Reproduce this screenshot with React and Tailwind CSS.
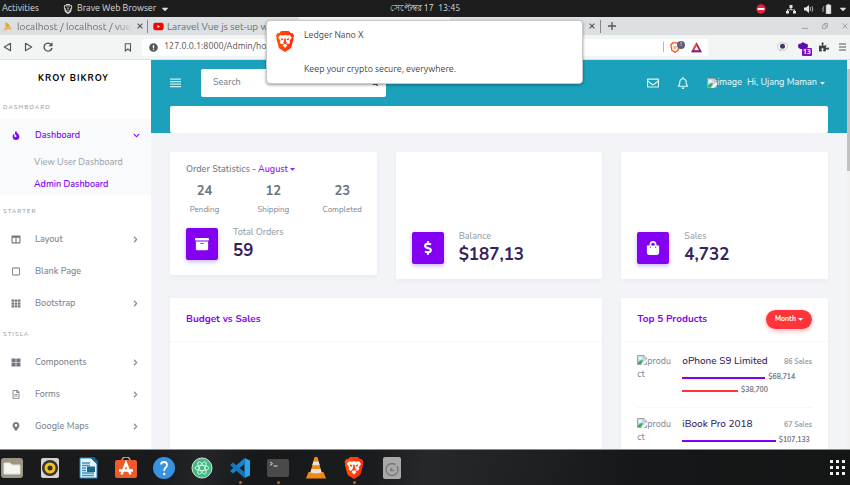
import React from "react";
import {
  FaFire, FaColumns, FaTh, FaThLarge, FaMapMarkerAlt, FaRegFileAlt, FaRegSquare,
  FaChevronRight, FaChevronDown, FaArchive, FaDollarSign, FaShoppingBag, FaRegEnvelope,
  FaRegBell, FaSearch, FaCaretDown, FaYoutube, FaPuzzlePiece, FaExclamationCircle,
} from "react-icons/fa";
import { SiBrave, SiPhpmyadmin } from "react-icons/si";

const system = "font-['Ubuntu','Open_Sans','Noto_Sans',sans-serif]";
const nunito = "font-['Nunito','Open_Sans','Noto_Sans',sans-serif]";

function Brave({ className }) {
  return (
    <span className={`relative inline-block ${className}`}>
      <svg viewBox="0 0 24 28" className="block h-full w-full">
        <defs>
          <linearGradient id="brave" x1="0" x2="1">
            <stop offset="0" stopColor="#ff5601" />
            <stop offset="1" stopColor="#ff2a12" />
          </linearGradient>
        </defs>
        <path fill="url(#brave)" d="M7 0h10l3 3 2-.4L24 6l-.8 3 .3 1.2-3 11.2c-.4 1.4-1.200 2-2.500 2.900L12 28l-6-3.700C4.700 23.400 3.900 22.800 3.500 21.400L.5 10.200.8 9 0 6l2-3.400L4 3z" />
        <path fill="#fff" d="M12 5.200 15 6l3.500-.6L21 9l-3 4 .8 2.600-2.500 2.200-1.900-1.100-.9.800 1.700 1.700L12 22.400l-3.200-3.200 1.700-1.700-.9-.8-1.900 1.100-2.500-2.200L6 13 3 9l2.500-3.600L9 6z" />
        <path fill="#ff4310" d="M6.500 9.200 10 10.500l-.8 1.800-2-.4zM17.500 9.200 14 10.500l.8 1.800 2-.4zM11 10h2l.5 4.500L15 16l-3 1.500L9 16l1.500-1.500z" />
      </svg>
    </span>
  );
}

function BrokenImage({ className = "" }) {
  return (
    <svg viewBox="0 0 10 10" className={`inline-block h-[10px] w-[10px] ${className}`}>
      <path d="M.5.500h6.500l2.500 2.500v6.500h-9z" fill="#c9d7f2" stroke="#a3a3a3" />
      <path d="M7 .5v2.500h2.500" fill="#fff" stroke="#a3a3a3" strokeWidth=".7" />
      <circle cx="3.300" cy="3.200" r="1.300" fill="#fff" />
      <path d="M1 9V7.500C3 5 5 5 6 5.500L4 9z" fill="#35b34a" />
      <path d="M4 10 10 4v2.500L6.500 10z" fill="#fff" />
    </svg>
  );
}

function Caret() {
  return (
    <svg viewBox="0 0 5 3" className="h-[3px] w-[5px]">
      <path d="M0 0h5L2.500 2.800z" fill="currentColor" />
    </svg>
  );
}

function TopBar() {
  return (
    <div className={`grid h-[17px] shrink-0 grid-cols-3 items-center bg-[#1d1d1d] text-[9px] text-[#dedede] ${system}`}>
      <div className="flex items-center">
        <button className="pl-[2px]">Activities</button>
        <button className="ml-[24px] flex items-center gap-1 whitespace-nowrap">
          <SiBrave className="text-[10px] text-[#cfcfcf]" />
          Brave Web Browser
          <FaCaretDown className="text-[10px]" />
        </button>
      </div>
      <div className="text-center">সেপ্টেম্বর 17&nbsp; 13:45</div>
      <div className="flex items-center justify-end pr-[2px]">
        <svg viewBox="0 0 10 10" className="mr-[20px] h-[10px] w-[10px]">
          <circle cx="5" cy="5" r="4.700" fill="#ee2040" />
          <rect x="1.700" y="4" width="6.600" height="2" fill="#fff" />
        </svg>
        <svg viewBox="0 0 10 10" className="mr-[8px] h-[10px] w-[10px]" fill="#e6e6e6">
          <path d="M3.500 1h3v3h-1v1.500h3.500V7h1v2.500H7V7h1v-.7H2V7h1v2.500H0V7h1V5.500h3.500V4h-1z" />
        </svg>
        <svg viewBox="0 0 10 10" className="mr-[8px] h-[10px] w-[10px]">
          <path d="M0 3.500h2L5 1v8L2 6.500H0z" fill="#e6e6e6" />
          <path d="M6.300 3v4M8 2.300Q9.500 5 8 7.700" fill="none" stroke="#c4c4c4" strokeWidth=".9" />
        </svg>
        <svg viewBox="0 0 10 10" className="mr-[6px] h-[10px] w-[10px]">
          <path d="M2 2 .5 5h1L.7 8" fill="none" stroke="#bbb" strokeWidth=".8" />
          <path d="M4 1h1.500V0h2v1H9v9H4z" fill="#e6e6e6" stroke="#999" strokeWidth=".5" />
        </svg>
        <FaCaretDown className="text-[10px]" />
      </div>
    </div>
  );
}

function Close() {
  return (
    <svg viewBox="0 0 6 6" className="h-[6px] w-[6px]">
      <path d="M.6.6l4.800 4.800M5.400.6.6 5.400" stroke="#55595c" strokeWidth="1.200" />
    </svg>
  );
}

function TabStrip() {
  return (
    <div className={`flex h-[18px] shrink-0 items-center bg-[#dce0e3] text-[10px] text-[#6b6e71] ${system}`}>
      <div className="flex h-full w-[147px] shrink-0 items-center pl-[2px]">
        <SiPhpmyadmin className="text-[11px] text-[#e99a26]" />
        <span className="ml-1 w-[116px] whitespace-nowrap [mask-image:linear-gradient(to_right,black_85%,transparent)]">localhost / localhost / vuej</span>
        <button aria-label="Close tab" className="ml-[4px]"><Close /></button>
      </div>
      <div className="flex h-[13px] w-[152px] shrink-0 items-center border-l border-[#85888b] pl-[5px]">
        <FaYoutube className="text-[11px] text-[#f00]" />
        <span className="ml-[3px] whitespace-nowrap">Laravel Vue js set-up with</span>
      </div>
      <div className="h-full w-[151px] shrink-0 bg-[#f2f3f4]" />
      <div className="flex h-[13px] w-[151px] shrink-0 items-center justify-end border-r border-[#85888b] pr-[5px]">
        <button aria-label="Close tab"><Close /></button>
      </div>
      <button aria-label="New tab" className="ml-[7px]">
        <svg viewBox="0 0 8 8" className="h-2 w-2"><path d="M4 0v8M0 4h8" stroke="#53575a" strokeWidth="1.300" /></svg>
      </button>
      <div className="ml-auto flex items-center gap-[14px] pr-[2px]">
        <button aria-label="Minimize"><svg viewBox="0 0 6 6" className="h-[6px] w-[6px]"><path d="M0 5.500h6" stroke="#a5a8ab" strokeWidth="1.200" /></svg></button>
        <button aria-label="Restore"><svg viewBox="0 0 6 6" className="h-[6px] w-[6px]"><path d="M.5 2h3.500v3.500H.5zM2 2V.5h3.500V4H4" fill="none" stroke="#9b9ea1" strokeWidth=".9" /></svg></button>
        <button aria-label="Close window"><svg viewBox="0 0 6 6" className="h-[6px] w-[6px]"><path d="M.5.5l5 5M5.500.5l-5 5" stroke="#a0a3a6" strokeWidth="1" /></svg></button>
      </div>
    </div>
  );
}

function Toolbar() {
  return (
    <div className={`flex h-[25px] shrink-0 items-center border-b border-[#dcdedf] bg-[#f3f4f4] text-[9px] text-[#4f5254] ${system}`}>
      <button aria-label="Back" className="ml-[3px]"><svg viewBox="0 0 9 10" className="h-[10px] w-[9px]"><path d="M7.500 1.300v7.400L1.300 5z" fill="none" stroke="#55585b" strokeWidth="1.200" strokeLinejoin="round" /></svg></button>
      <button aria-label="Forward" className="ml-[12px]"><svg viewBox="0 0 9 10" className="h-[10px] w-[9px]"><path d="M1.500 1.300v7.400L7.700 5z" fill="none" stroke="#55585b" strokeWidth="1.200" strokeLinejoin="round" /></svg></button>
      <button aria-label="Reload" className="ml-[10px]"><svg viewBox="0 0 10 10" className="h-[10px] w-[10px]"><path d="M8.200 2.600A4 4 0 1 0 9 6" fill="none" stroke="#4a4d50" strokeWidth="1.300" /><path d="M9.500.3v4H5.500z" fill="#4a4d50" /></svg></button>
      <button aria-label="Bookmark" className="ml-[71px]"><svg viewBox="0 0 8 9" className="h-[9px] w-[8px]"><path d="M1.300.7h5.200v7.300L3.900 6 1.300 8z" fill="none" stroke="#55585b" strokeWidth="1.100" /></svg></button>
      <div className="ml-[10px] flex h-[17px] w-[566px] items-center rounded-[2px] bg-white pl-[7px] pr-[6px]">
        <FaExclamationCircle className="shrink-0 text-[9px] text-[#55585b]" />
        <input aria-label="Address" readOnly defaultValue="127.0.0.1:8000/Admin/home" className="ml-[6px] min-w-0 flex-1 bg-transparent outline-none" />
        <div className="mr-[6px] h-[10px] w-px bg-[#b5b7b9]" />
        <span className="relative mr-[10px] h-[11px] w-[11px]">
          <svg viewBox="0 0 11 12" className="h-[11px] w-[10px]"><path d="M3 1h5l2 2-1 6-3.500 2.300L2 9 1 3z" fill="#fff5ef" stroke="#f4511e" strokeWidth="1.400" /><path d="M3.500 4 5.500 5l2-1-.8 3-1.200 1-1.200-1z" fill="#f4511e" opacity=".5" /></svg>
          <span className="absolute -top-px left-[7px] flex h-[8px] w-[8px] items-center justify-center rounded-full bg-[#5e6175] text-[5px] text-white">1</span>
        </span>
        <svg viewBox="0 0 11 11" className="h-[11px] w-[11px]"><path d="M5.500 2 9.500 9.300h-8z" fill="#fff" stroke="#9e1f63" strokeWidth="1.800" /><path d="M5.500 2 1.500 9.300" stroke="#ff4724" strokeWidth="1.800" /><path d="M1 9.300h9" stroke="#662d91" strokeWidth="1.800" /></svg>
      </div>
      <div className="ml-auto flex items-center gap-[10px] pr-[4px]">
        <svg viewBox="0 0 11 10" className="h-[10px] w-[11px]"><ellipse cx="5.500" cy="4.500" rx="5" ry="3.800" fill="#fff" stroke="#b9bbbd" strokeWidth=".8" /><circle cx="5.500" cy="4.300" r="2.500" fill="#443466" /><path d="M3 7 2 9.500 5.500 8" fill="#c5c7c9" /></svg>
        <span className="relative mr-px h-[11px] w-[10px]">
          <svg viewBox="0 0 10 10" className="h-[10px] w-[10px]"><path d="M5 0 7 1.500 9.500 2 10 5 8 7H2L0 5 .5 2 3 1.500z" fill="#5a0cad" /></svg>
          <span className="absolute left-[4px] top-[6px] flex h-[8px] items-center rounded-[1px] bg-[#7c12c4] px-px text-[7px] font-bold text-white">13</span>
        </span>
        <FaPuzzlePiece className="text-[10px] text-[#3f4245]" />
        <svg viewBox="0 0 7 8" className="h-2 w-[7px]"><path d="M0 1h7M0 4h7M0 7h7" stroke="#55585b" strokeWidth="1.100" /></svg>
      </div>
    </div>
  );
}

function Notification() {
  return (
    <div role="alert" className={`absolute left-[266px] top-[20px] flex h-[64px] w-[317px] rounded-[4px] border border-[#c9c9c9] bg-white pl-[9px] text-[9px] text-[#3f3f3f] shadow-[0_1px_3px_rgba(0,0,0,0.4)] ${system}`}>
      <Brave className="mt-[10px] h-[21px] w-[18px]" />
      <div className="ml-[10px] flex flex-col justify-between pb-[7px] pt-[7px] leading-[14px]">
        <p>Ledger Nano X</p>
        <p>Keep your crypto secure, everywhere.</p>
      </div>
    </div>
  );
}

function Heading({ children }) {
  return <h2 className="flex h-6 items-center pl-[3px] pt-px text-[6px] font-semibold uppercase tracking-[1px] text-[#9ba2ab]">{children}</h2>;
}

function MenuItem({ icon: Icon, label, arrow = true }) {
  return (
    <a href="#" className="flex h-8 items-center pl-[11px] pr-[12px] text-[9px] font-medium text-[#7d858f]">
      <Icon className="w-[10px] text-[9px] text-[#717983]" />
      <span className="ml-[14px] flex-1 pt-[2px]">{label}</span>
      {arrow && <FaChevronRight className="text-[7px]" />}
    </a>
  );
}

function Sidebar() {
  return (
    <aside className="w-[151px] shrink-0 bg-white">
      <a href="#" className="flex h-[35px] items-center justify-center pr-1 pt-[2px] text-[9px] font-bold tracking-[1px] text-black">KROY BIKROY</a>
      <Heading>Dashboard</Heading>
      <div className="mb-1 h-[76px] bg-[#f8fafb]">
        <a href="#" className="flex h-8 items-center pl-[11px] pr-[11px] text-[9px] font-semibold text-[#8405ee]">
          <FaFire className="w-[10px] text-[9px]" />
          <span className="ml-[14px] flex-1 pt-[2px]">Dashboard</span>
          <FaChevronDown className="text-[7px]" />
        </a>
        <a href="#" className="flex h-[22px] items-center pl-[34px] pt-[2px] text-[9px] text-[#979ea8]">View User Dashboard</a>
        <a href="#" className="flex h-[22px] items-center pl-[34px] pt-[2px] text-[9px] font-semibold text-[#8405ee]">Admin Dashboard</a>
      </div>
      <Heading>Starter</Heading>
      <MenuItem icon={FaColumns} label="Layout" />
      <MenuItem icon={FaRegSquare} label="Blank Page" arrow={false} />
      <MenuItem icon={FaTh} label="Bootstrap" />
      <div className="h-[3px]" />
      <Heading>Stisla</Heading>
      <MenuItem icon={FaThLarge} label="Components" />
      <MenuItem icon={FaRegFileAlt} label="Forms" />
      <MenuItem icon={FaMapMarkerAlt} label="Google Maps" />
    </aside>
  );
}

function Card({ className = "", children }) {
  return <section className={`rounded-[2px] bg-white shadow-[0_2px_5px_rgba(0,0,0,0.04)] ${className}`}>{children}</section>;
}

function Stat({ icon: Icon, label, value }) {
  return (
    <div className="flex gap-[15px] px-4 pb-[15px]">
      <div className="flex h-8 w-8 items-center justify-center rounded-[2px] bg-[#8300f0] text-white shadow-[0_2px_4px_#c9b8f5]">
        <Icon className="text-[14px]" />
      </div>
      <div>
        <h3 className="text-[9px] font-medium leading-[9px] text-[#98a1aa]">{label}</h3>
        <p className="mt-[5px] text-[17px] font-bold leading-[18px] text-[#36235c]">{value}</p>
      </div>
    </div>
  );
}

function Product({ name, sales, bars }) {
  return (
    <li className="flex h-[63px] border-b border-[#f7f7f8] pt-[10px]">
      <div className="w-[35px] text-[9px] leading-[13px] text-[#7d858f] break-all"><BrokenImage className="align-top" />product</div>
      <div className="ml-[10px] flex-1">
        <div className="flex items-center justify-between leading-[13px]">
          <h4 className="text-[10px] font-medium text-[#36235c]">{name}</h4>
          <span className="text-[7px] font-bold text-[#98a1aa]">{sales} Sales</span>
        </div>
        <div className="mt-[3px]">
          {bars.map(([amount, width, color]) => (
            <div key={amount} className="flex h-[13px] items-center gap-[3px] text-[7px] font-bold text-[#737b85]">
              <div className={`h-[2px] shrink-0 ${color}`} style={{ width: `${width}%` }} />
              {amount}
            </div>
          ))}
        </div>
      </div>
    </li>
  );
}

function Main() {
  return (
    <main className="min-w-0 flex-1 overflow-hidden bg-[#f3f4f8]">
      <div className="bg-[#1ba1bc] px-[19px]">
        <nav className="flex h-[46px] items-center text-white">
          <button aria-label="Toggle menu">
            <svg viewBox="0 0 11 10" className="h-[10px] w-[11px]"><path d="M0 1.200h11M0 3.700h11M0 6.200h11M0 8.700h11" stroke="#cdebf1" strokeWidth="1.200" /></svg>
          </button>
          <form className="ml-[20px] flex h-7 w-[185px] items-center rounded-[2px] bg-white pl-[12px] pr-[8px]">
            <input aria-label="Search" placeholder="Search" className="min-w-0 flex-1 bg-transparent text-[9px] font-medium text-gray-700 outline-none placeholder:text-[#7d858f]" />
            <button type="button" aria-label="Submit search"><FaSearch className="text-[6px] text-[#222]" /></button>
          </form>
          <div className="ml-auto flex items-center pr-[3px] text-[9px] text-[#e3f4f7]">
            <button aria-label="Messages"><FaRegEnvelope className="text-[12px]" /></button>
            <button aria-label="Alerts" className="ml-[18px]"><FaRegBell className="text-[12px]" /></button>
            <button className="ml-[18px] flex items-center font-medium">
              <BrokenImage />image
              <span className="ml-[5px]">Hi, Ujang Maman</span>
              <span className="ml-[3px]"><Caret /></span>
            </button>
          </div>
        </nav>
        <div className="h-[27px] rounded-[2px] bg-white" />
      </div>
      <div className="grid grid-cols-3 items-start gap-[19px] px-[19px] pt-[19px]">
        <Card>
          <h3 className="flex items-center px-4 pt-[11px] text-[9px] font-semibold leading-[12px] text-[#7d858f]">
            Order Statistics -
            <button className="ml-[2px] flex items-center gap-[2px] text-[#8f1cf0]">August <Caret /></button>
          </h3>
          <div className="grid grid-cols-3 pb-[12px] pt-[8px] text-center">
            {[["24", "Pending"], ["12", "Shipping"], ["23", "Completed"]].map(([n, l]) => (
              <div key={l}>
                <p className="text-[13px] font-bold leading-[16px] text-[#6b7480]">{n}</p>
                <p className="mt-[5px] text-[8px] leading-[12px] text-[#7d858f]">{l}</p>
              </div>
            ))}
          </div>
          <Stat icon={FaArchive} label="Total Orders" value="59" />
        </Card>
        <Card className="pt-20"><Stat icon={FaDollarSign} label="Balance" value="$187,13" /></Card>
        <Card className="pt-20"><Stat icon={FaShoppingBag} label="Sales" value="4,732" /></Card>
        <Card className="col-span-2 h-[300px]">
          <h3 className="flex h-[44px] items-center border-b border-[#f7f7f8] px-4 text-[10px] font-bold text-[#8405ee]">Budget vs Sales</h3>
        </Card>
        <Card className="h-[300px]">
          <div className="flex h-[44px] items-center justify-between border-b border-[#f7f7f8] px-4">
            <h3 className="text-[10px] font-bold text-[#8405ee]">Top 5 Products</h3>
            <button className="flex h-[19px] items-center gap-[2px] rounded-full bg-[#ff353b] px-[9px] text-[7px] font-bold text-white shadow-[0_2px_4px_#fdb5b8]">
              Month <Caret />
            </button>
          </div>
          <ul className="px-4 pt-[3px]">
            <Product name="oPhone S9 Limited" sales="86" bars={[["$68,714", 64, "bg-[#8300f0]"], ["$38,700", 43, "bg-[#ff353b]"]]} />
            <Product name="iBook Pro 2018" sales="67" bars={[["$107,133", 72, "bg-[#8300f0]"]]} />
          </ul>
        </Card>
      </div>
    </main>
  );
}

const apps = [
  { name: "Files", icon: <><rect x="0" y="1" width="22" height="20" rx="3" fill="#9d9683" /><path d="M3 6h6l2 2h8v9H3z" fill="#f7f5f0" stroke="#e6e2d8" /></> },
  { name: "Rhythmbox", icon: <><rect x="2" y="1" width="18" height="20" rx="2" fill="#d6d2c9" /><circle cx="11" cy="11" r="8" fill="#333" /><circle cx="11" cy="11" r="5.500" fill="#f3c21c" /><circle cx="11" cy="11" r="2.500" fill="#333" /></> },
  { name: "Writer", icon: <><path d="M3 1h11l6 6v14H3z" fill="#e8f4fb" stroke="#2386bd" /><path d="M13 0h4l4 4v4z" fill="#0f6594" /><path d="M5 6h8M5 8.500h8M5 11h4M5 13.500h4M5 16h12M5 18.500h12" stroke="#3a93c6" strokeWidth="1.300" /><rect x="10" y="9.500" width="8" height="5.500" fill="#1c6690" /></> },
  { name: "Software", icon: <><path d="M7 4q0-4 4-4t4 4" fill="none" stroke="#b8a68c" strokeWidth="1.500" /><rect x="0" y="3" width="22" height="18" rx="2" fill="#ec5b29" /><path d="M6.500 17.500 11 6l4.500 11.500M4 13.500h14" fill="none" stroke="#fff" strokeWidth="2.300" /></> },
  { name: "Help", icon: <><circle cx="11" cy="11" r="11" fill="#3793e0" /><path d="M8 7.500Q8 5 11 5t3 3q0 1.500-1.500 2.700T11.200 14" fill="none" stroke="#fff" strokeWidth="1.800" /><circle cx="11.200" cy="17" r="1.200" fill="#fff" /></> },
  { name: "Atom", icon: <><circle cx="11" cy="11" r="10" fill="#42b983" stroke="#d8e9df" /><g fill="none" stroke="#e5fff1" strokeWidth=".8"><ellipse cx="11" cy="11" rx="7" ry="2.600" /><ellipse cx="11" cy="11" rx="7" ry="2.600" transform="rotate(60 11 11)" /><ellipse cx="11" cy="11" rx="7" ry="2.600" transform="rotate(120 11 11)" /></g></> },
  { name: "Code", running: true, icon: <><path d="M15.500 1 21 3.500v15L15.500 21z" fill="#2aa5ec" /><path d="M15.500 1v6L4 16.500 1 14z" fill="#1684cc" /><path d="M15.500 21v-6L4 5.500 1 8z" fill="#1377bd" /></> },
  { name: "Terminal", running: true, icon: <><rect x="0" y="2" width="22" height="18" rx="2" fill="#4a4a4a" /><path d="m3 5 2.500 1.700L3 8.500M6.500 9h4" fill="none" stroke="#ddd" /></> },
  { name: "VLC", icon: <><path d="m3.500 15-2.500 6.500h20L18.500 15z" fill="#f08a16" /><path d="M9.500 0h3l4.500 17q-6 3-12 0z" fill="#f08a16" /><path d="M8.300 4.500h5.400l1 3.800H7.300zM6.300 12h9.400l.9 3.500q-5.600 2-11.200 0z" fill="#e4e2df" /></> },
  { name: "Brave", running: true },
  { name: "Disks", icon: <><rect x="2" y="0" width="18" height="22" rx="2" fill="#a9a9a9" /><circle cx="11" cy="12.500" r="6" fill="none" stroke="#777" strokeWidth="1.300" /><circle cx="11" cy="12.500" r="2" fill="#777" /><path d="m11 12.500 5-5" stroke="#a9a9a9" strokeWidth="2" /></> },
];

function Dock() {
  return (
    <div className="flex h-[36px] shrink-0 items-start border-t border-[#8b8b8b] bg-[linear-gradient(100deg,#191a1b_0%,#191a1b_18%,#242528_24%,#17181a_30%,#1b1c1e_44%,#26282b_50%,#1e1f21_64%,#161718_75%,#141515_100%)] pl-px pr-[5px]">
      <div className="flex gap-4">
        {apps.map((app) => (
          <button key={app.name} aria-label={app.name} className="flex w-[22px] flex-col items-center pt-[7px]">
            {app.icon ? <svg viewBox="0 0 22 22" className="h-[22px] w-[22px]">{app.icon}</svg> : <Brave className="h-[22px] w-[20px]" />}
            {app.running && <span className="mt-[2px] h-[3px] w-[3px] rounded-full bg-[#e4542a]" />}
          </button>
        ))}
      </div>
      <button aria-label="Show applications" className="ml-auto mt-[10px] grid grid-cols-3 gap-[3px]">
        {Array.from({ length: 9 }, (_, i) => <span key={i} className="h-[3px] w-[3px] bg-[#f0f0f0]" />)}
      </button>
    </div>
  );
}

export default function App() {
  return (
    <div className="relative flex h-screen flex-col overflow-hidden bg-white">
      <TopBar />
      <TabStrip />
      <Toolbar />
      <div className={`flex min-h-0 flex-1 ${nunito}`}>
        <Sidebar />
        <Main />
        <div className="w-[3px] shrink-0 bg-[#f1f1f1] pt-[9px]"><div className="h-[102px] bg-[#c1c1c1]" /></div>
      </div>
      <Dock />
      <Notification />
    </div>
  );
}
